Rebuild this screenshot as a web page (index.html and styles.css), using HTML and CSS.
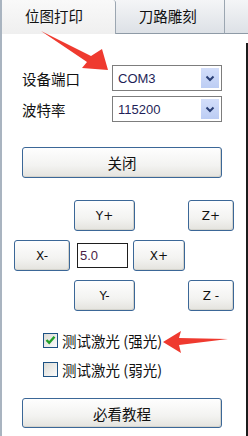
FILE: index.html
```html
<!DOCTYPE html>
<html lang="zh-CN">
<head>
  <meta charset="UTF-8" />
  <title>位图打印</title>
  <link rel="stylesheet" href="styles.css">
</head>
<body>

<div class="tabs">
  <div class="tab active">位图打印</div>
  <div class="tab">刀路雕刻</div>
  <div class="tab rest"></div>
</div>

<div class="panel">
  <div class="content">

    <div class="field first">
      <span class="label">设备端口</span>
      <div class="combo"><span class="value">COM3</span><span class="drop"><svg width="10" height="7" viewBox="0 0 10 7"><path d="M1.5 1.5 L5 5 L8.5 1.5" fill="none" stroke="#2a3f75" stroke-width="2"/></svg></span></div>
    </div>
    <div class="field">
      <span class="label">波特率</span>
      <div class="combo"><span class="value">115200</span><span class="drop"><svg width="10" height="7" viewBox="0 0 10 7"><path d="M1.5 1.5 L5 5 L8.5 1.5" fill="none" stroke="#2a3f75" stroke-width="2"/></svg></span></div>
    </div>

    <button class="btn wide close">关闭</button>

    <!-- jog pad -->
    <div class="jog">
      <div class="jog-row axis">
        <button class="btn y">Y+</button>
        <button class="btn z">Z+</button>
      </div>
      <div class="jog-row mid">
        <button class="btn xm">X-</button>
        <input class="step" type="text" value="5.0">
        <button class="btn xp">X+</button>
      </div>
      <div class="jog-row axis">
        <button class="btn y">Y-</button>
        <button class="btn z">Z -</button>
      </div>
    </div>

    <label class="check first">
      <span class="box"><svg width="11" height="10" viewBox="0 0 11 10"><path d="M1.5 5 L4.2 7.8 L9.5 1.8" fill="none" stroke="#22a02a" stroke-width="2.4"/></svg></span>
      <span>测试激光 (强光)</span>
    </label>
    <label class="check">
      <span class="box"></span>
      <span>测试激光 (弱光)</span>
    </label>

    <button class="btn wide guide">必看教程</button>
  </div>
  <div class="edge"></div>
</div>

<!-- red annotation arrows -->
<svg class="marks" width="248" height="436" viewBox="0 0 248 436">
  <polygon points="41,31 91,56 102,49 108,70 82,68 87,62" fill="#ef3a2f"/>
  <polygon points="163,342 181,331 179,338 228,339 179,345 181,353" fill="#ef3a2f"/>
</svg>

</body>
</html>
```

FILE: styles.css
```css
body {
  margin: 0;
  width: 248px;
  height: 436px;
  overflow: hidden;
  position: relative;
  background: #fff;
  font-family: "Noto Sans CJK SC", "Liberation Sans", sans-serif;
  font-size: 14px;
  color: #111;
}
.tabs {
  display: flex;
  height: 34px;
  border-left: 2px solid #a9b4c0;
}
.tab {
  box-sizing: border-box;
  width: 115px;
  padding-left: 23px;
  line-height: 31px;
  font-size: 14.5px;
  background: linear-gradient(#f4f5f7, #dde1e6);
  border-right: 1px solid #9ba6b1;
  border-bottom: 1px solid #8e9aa6;
}
.tab.active {
  width: 120px;
  background: linear-gradient(#f9f9f9, #efefef);
  border-bottom: none;
  border-top-right-radius: 3px;
}
.tab.rest {
  flex: 1;
  border-right: none;
}
.panel {
  display: flex;
  height: 402px;
  border-left: 2px solid #a9b4c0;
}
.content {
  flex: 1;
}
.edge {
  width: 2px;
  margin-top: 9px;
  background: #1c1c1c;
}
.field {
  display: flex;
  align-items: center;
  height: 26px;
  margin-top: 5px;
  padding-left: 20px;
}
.field.first {
  margin-top: 31px;
}
.label {
  width: 90px;
  font-size: 14.5px;
}
.combo {
  box-sizing: border-box;
  width: 110px;
  height: 26px;
  border: 1px solid #7d7d7d;
  display: flex;
  align-items: center;
  justify-content: space-between;
  padding: 2px;
}
.value {
  padding-left: 3px;
  font-family: "Liberation Sans", sans-serif;
  font-size: 13px;
  color: #1f1f58;
}
.drop {
  width: 18px;
  height: 20px;
  background: linear-gradient(#d3defa, #bccdf4);
  display: flex;
  align-items: center;
  justify-content: center;
}
.btn {
  box-sizing: border-box;
  height: 31px;
  padding: 0;
  border: 1px solid #3b6797;
  border-radius: 3px;
  background: linear-gradient(#fefefe, #f3f3f1 60%, #e4e3de);
  box-shadow: inset -1px -1px 0 #d4d3cc;
  font-family: "DejaVu Sans", sans-serif;
  font-size: 12px;
  color: #111;
}
.btn.wide {
  display: block;
  width: 200px;
  margin-left: 20px;
  font-family: "Noto Sans CJK SC", sans-serif;
  font-size: 14.5px;
}
.close {
  margin-top: 25px;
}
.jog {
  margin-top: 22px;
  display: flex;
  flex-direction: column;
  gap: 9px;
}
.jog-row {
  display: flex;
  align-items: center;
  height: 31px;
}
.jog-row.axis {
  padding-left: 72px;
}
.jog-row.mid {
  padding-left: 12px;
}
.btn.y {
  width: 61px;
}
.btn.z {
  width: 46px;
  margin-left: 53px;
}
.btn.xm {
  width: 56px;
}
.btn.xp {
  width: 52px;
  margin-left: 5px;
}
.step {
  box-sizing: border-box;
  width: 51px;
  height: 25px;
  margin-left: 7px;
  padding: 0 2px;
  border: 1px solid #1e1e1e;
  font-family: "Liberation Sans", sans-serif;
  font-size: 13px;
  color: #4a1d45;
  outline: none;
}
.check {
  display: flex;
  align-items: center;
  height: 18px;
  margin-top: 11px;
  padding-left: 41px;
  font-size: 14.5px;
}
.check.first {
  margin-top: 20px;
}
.box {
  box-sizing: border-box;
  width: 15px;
  height: 15px;
  margin-right: 4px;
  border: 1px solid #1d5284;
  background: linear-gradient(135deg, #dcdcd6, #fbfbfb);
  display: flex;
  align-items: center;
  justify-content: center;
}
.guide {
  height: 30px;
  margin-top: 20px;
}
.marks {
  position: absolute;
  left: 0;
  top: 0;
  pointer-events: none;
}
```
